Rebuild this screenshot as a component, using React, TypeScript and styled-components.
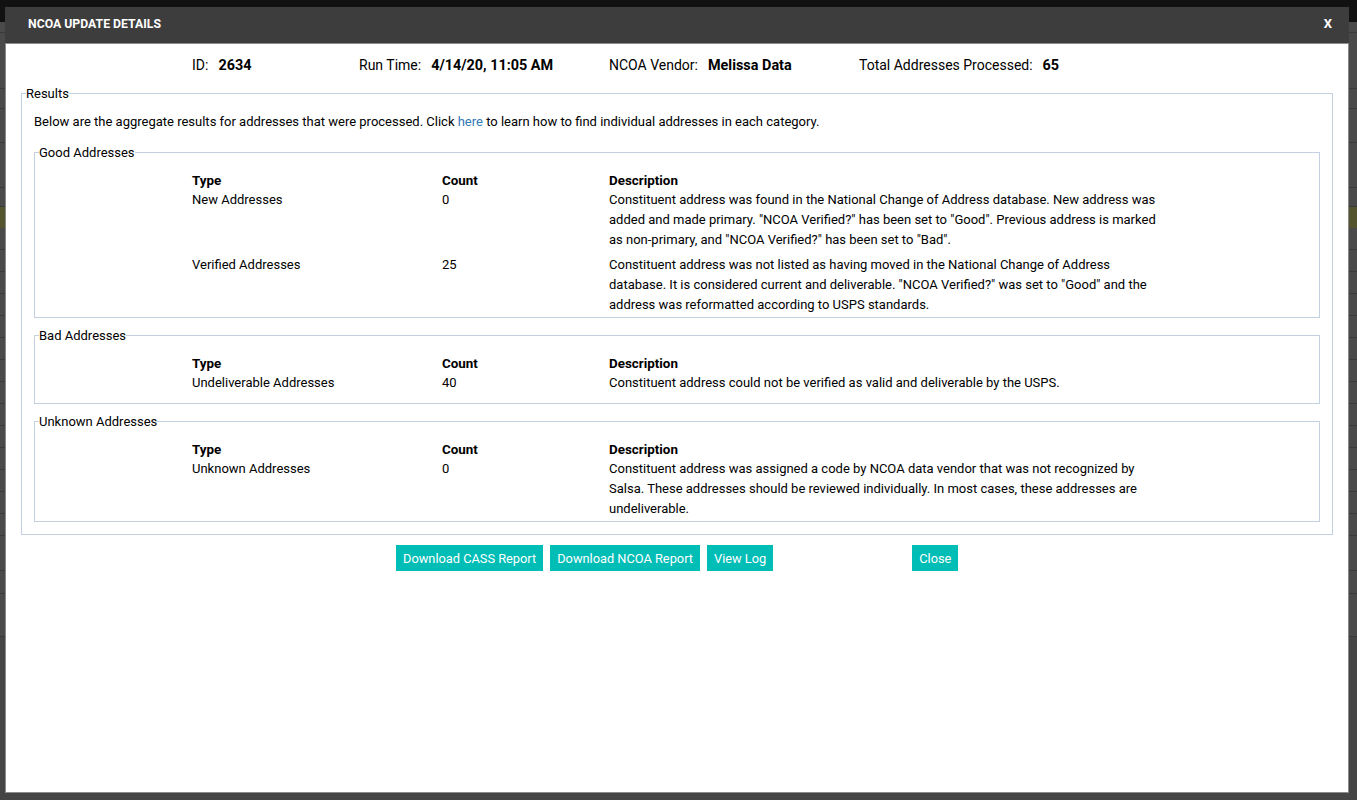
import React from 'react'
import styled, { createGlobalStyle } from 'styled-components'

const GlobalStyle = createGlobalStyle`
    html, body {
        margin: 0;
        padding: 0;
        height: 100%;
        overflow: hidden;
        background: #454545;
        font-family: Roboto, "Liberation Sans", sans-serif;
        font-size: 13px;
        color: #000;
    }
`

const Page = styled.div`
    position: relative;
    width: 1357px;
    height: 800px;
    overflow: hidden;
`

const TopBar = styled.div`
    height: 22px;
    background: #111111;
`

const BackRow = styled.div<{ $h: number; $tone?: 'olive' }>`
    box-sizing: border-box;
    height: ${(p) => p.$h}px;
    background: ${(p) => (p.$tone === 'olive' ? '#54542f' : '#4a4a4a')};
    border-bottom: 1px solid ${(p) => (p.$tone === 'olive' ? '#54542f' : '#3a3a3a')};
`

const Modal = styled.div`
    position: absolute;
    top: 7px;
    left: 5px;
    width: 1344px;
    height: 786px;
    box-sizing: border-box;
    display: flex;
    flex-direction: column;
    background: #ffffff;
    border: 1px solid #8a8a8a;
    border-top: 0;
`

const ModalHeader = styled.div`
    height: 34px;
    margin: 0 -1px;
    display: flex;
    align-items: center;
    justify-content: space-between;
    padding: 0 17px 2px 23px;
    background: #3d3d3d;
    border-bottom: 1px solid #8a8a8a;
    color: #ffffff;
    font-size: 12.25px;
    font-weight: 700;
`

const CloseX = styled.span`
    margin-top: -2px;
    font-size: 13px;
    font-weight: 700;
`

const ModalBody = styled.div`
    padding: 11px 15px 0;
`

const Summary = styled.div`
    display: grid;
    grid-template-columns: 167px 250px 250px 1fr;
    padding-left: 171px;
    font-size: 14px;
    line-height: 20px;
`

const SummaryItem = styled.div`
    display: flex;
    align-items: baseline;
    gap: 10px;
    white-space: nowrap;
`

const SummaryValue = styled.b`
    font-size: 14.4px;
    font-weight: 700;
`

const ResultsBox = styled.fieldset`
    margin: 6px 0 0;
    padding: 8px 12px 12px 4px;
    min-width: 0;
    border: 1px solid #c3d0df;
`

const BoxLegend = styled.legend`
    padding: 2px 0 0;
    line-height: 20px;
`

const ResultsContent = styled.div`
    padding-left: 8px;
`

const Intro = styled.p`
    margin: 0 0 9px;
    line-height: 20px;
`

const Link = styled.a`
    color: #337ab7;
    text-decoration: none;
`

const Group = styled.fieldset<{ $extra?: number }>`
    margin: 0 0 6px;
    padding: 8px 0 ${(p) => 2 + (p.$extra ?? 0)}px 4px;
    min-width: 0;
    border: 1px solid #c3d0df;

    &:last-child {
        margin-bottom: 0;
    }
`

const ResultGrid = styled.div`
    display: grid;
    grid-template-columns: 250px 167px 550px;
    padding-left: 153px;
    line-height: 20px;
`

const HeadCell = styled.div`
    font-size: 13.4px;
    font-weight: 700;
    line-height: 19px;
`

const Cell = styled.div<{ $gap?: boolean }>`
    padding-bottom: ${(p) => (p.$gap ? 5 : 0)}px;
`

const Actions = styled.div`
    display: flex;
    gap: 7px;
    margin-top: 10px;
    padding-left: 375px;
`

const Button = styled.button<{ $push?: number }>`
    height: 26px;
    padding: 0 7px;
    margin-left: ${(p) => p.$push ?? 0}px;
    border: 0;
    background: #00bdb6;
    color: #ffffff;
    font-family: inherit;
    font-size: 12.8px;
`

interface Row {
    type: string
    count: number
    description: string
}

interface GroupData {
    title: string
    extra?: number
    rows: Row[]
}

const GROUPS: GroupData[] = [
    {
        title: 'Good Addresses',
        rows: [
            {
                type: 'New Addresses',
                count: 0,
                description:
                    'Constituent address was found in the National Change of Address database. New address was added and made primary. "NCOA Verified?" has been set to "Good". Previous address is marked as non-primary, and "NCOA Verified?" has been set to "Bad".',
            },
            {
                type: 'Verified Addresses',
                count: 25,
                description:
                    'Constituent address was not listed as having moved in the National Change of Address database. It is considered current and deliverable. "NCOA Verified?" was set to "Good" and the address was reformatted according to USPS standards.',
            },
        ],
    },
    {
        title: 'Bad Addresses',
        extra: 8,
        rows: [
            {
                type: 'Undeliverable Addresses',
                count: 40,
                description:
                    'Constituent address could not be verified as valid and deliverable by the USPS.',
            },
        ],
    },
    {
        title: 'Unknown Addresses',
        rows: [
            {
                type: 'Unknown Addresses',
                count: 0,
                description:
                    'Constituent address was assigned a code by NCOA data vendor that was not recognized by Salsa. These addresses should be reviewed individually. In most cases, these addresses are undeliverable.',
            },
        ],
    },
]

const ROW_HEIGHTS = [
    11, 56, 20, 34, 45, 19, 21, 22, 22, 22, 22, 22, 22, 22, 22, 22, 22, 22, 22,
    22, 22, 35, 23, 43,
]

export default function App() {
    return (
        <>
            <GlobalStyle />
            <Page>
                <TopBar />
                {ROW_HEIGHTS.map((h, i) => (
                    <BackRow key={i} $h={h} $tone={i === 6 ? 'olive' : undefined} />
                ))}
                <Modal>
                    <ModalHeader>
                        <span>NCOA UPDATE DETAILS</span>
                        <CloseX>X</CloseX>
                    </ModalHeader>
                    <ModalBody>
                        <Summary>
                            <SummaryItem>
                                ID: <SummaryValue>2634</SummaryValue>
                            </SummaryItem>
                            <SummaryItem>
                                Run Time: <SummaryValue>4/14/20, 11:05 AM</SummaryValue>
                            </SummaryItem>
                            <SummaryItem>
                                NCOA Vendor: <SummaryValue>Melissa Data</SummaryValue>
                            </SummaryItem>
                            <SummaryItem>
                                Total Addresses Processed: <SummaryValue>65</SummaryValue>
                            </SummaryItem>
                        </Summary>
                        <ResultsBox>
                            <BoxLegend>Results</BoxLegend>
                            <ResultsContent>
                                <Intro>
                                    Below are the aggregate results for addresses that were
                                    processed. Click <Link href="#">here</Link> to learn how to
                                    find individual addresses in each category.
                                </Intro>
                                {GROUPS.map((group) => (
                                    <Group key={group.title} $extra={group.extra}>
                                        <BoxLegend>{group.title}</BoxLegend>
                                        <ResultGrid>
                                            <HeadCell>Type</HeadCell>
                                            <HeadCell>Count</HeadCell>
                                            <HeadCell>Description</HeadCell>
                                            {group.rows.map((row, i) => {
                                                const gap = i < group.rows.length - 1
                                                return (
                                                    <React.Fragment key={row.type}>
                                                        <Cell $gap={gap}>{row.type}</Cell>
                                                        <Cell $gap={gap}>{row.count}</Cell>
                                                        <Cell $gap={gap}>{row.description}</Cell>
                                                    </React.Fragment>
                                                )
                                            })}
                                        </ResultGrid>
                                    </Group>
                                ))}
                            </ResultsContent>
                        </ResultsBox>
                        <Actions>
                            <Button>Download CASS Report</Button>
                            <Button>Download NCOA Report</Button>
                            <Button>View Log</Button>
                            <Button $push={132}>Close</Button>
                        </Actions>
                    </ModalBody>
                </Modal>
            </Page>
        </>
    )
}
